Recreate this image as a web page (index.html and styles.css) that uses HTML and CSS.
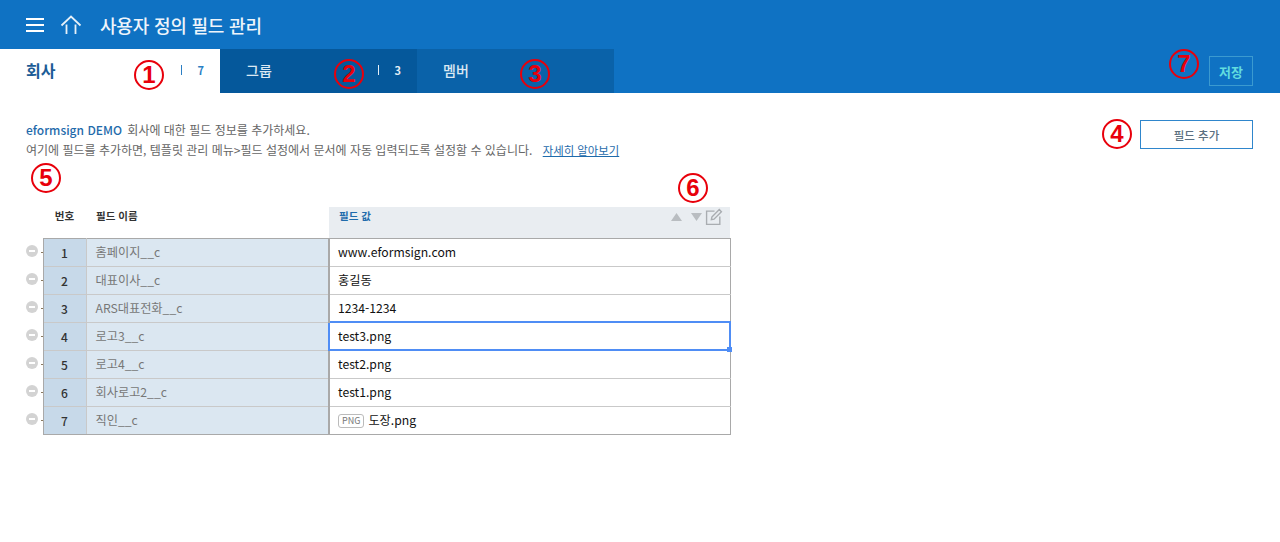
FILE: index.html
```html
<!DOCTYPE html>
<html lang="ko">
<head>
    <meta charset="UTF-8">
    <meta name="viewport" content="width=device-width, initial-scale=1.0">
    <title>사용자 정의 필드 관리</title>
    <link rel="stylesheet" href="styles.css">
</head>
<body>
    <header class="topbar">
        <svg class="menu-icon" width="18" height="14" viewBox="0 0 18 14"><path d="M0 1h18M0 7h18M0 13h18" stroke="#fff" stroke-width="2" fill="none"/></svg>
        <svg class="home-icon" width="22" height="20" viewBox="0 0 22 20"><path d="M1.500 10.500 11 1.500l9.500 9M6.500 9.500V19M15.500 9.500V19" stroke="#e6f0f8" stroke-width="1.800" fill="none"/></svg>
        <h1>사용자 정의 필드 관리</h1>
    </header>

    <nav class="tabs">
        <div class="tab tab-active">
            <span class="tab-name">회사</span>
            <span class="tab-count">7</span>
        </div>
        <div class="tab tab-group">
            <span class="tab-name">그룹</span>
            <span class="tab-count">3</span>
        </div>
        <div class="tab tab-member">
            <span class="tab-name">멤버</span>
        </div>
        <button class="save-btn">저장</button>
    </nav>

    <main class="content">
        <div class="intro">
            <div>
                <p class="intro-line"><span class="company">eformsign DEMO</span> 회사에 대한 필드 정보를 추가하세요.</p>
                <p class="intro-line">여기에 필드를 추가하면, 템플릿 관리 메뉴&gt;필드 설정에서 문서에 자동 입력되도록 설정할 수 있습니다. <a class="more" href="#">자세히 알아보기</a></p>
            </div>
            <button class="add-btn">필드 추가</button>
        </div>

        <table class="fields">
            <thead>
                <tr>
                    <th class="col-gutter"></th>
                    <th class="col-num">번호</th>
                    <th class="col-name">필드 이름</th>
                    <th class="col-value">
                        <div class="value-head">
                            <span>필드 값</span>
                            <span class="value-tools">
                                <svg class="tool-up" width="11" height="8" viewBox="0 0 11 8"><path d="M5.500 0 11 8H0z" fill="#b9bdc1"/></svg>
                                <svg class="tool-down" width="11" height="8" viewBox="0 0 11 8"><path d="M0 0h11L5.500 8z" fill="#b9bdc1"/></svg>
                                <svg width="18" height="18" viewBox="0 0 17 17"><path d="M9 3H1.500v12.500H14V8M6.500 8.500 13.500 1.500l2 2-7 7-2.500.5z" stroke="#a9adb1" stroke-width="1.300" fill="none"/></svg>
                            </span>
                        </div>
                    </th>
                </tr>
            </thead>
            <tbody>
                <tr>
                    <td class="gutter"><span class="minus"></span></td>
                    <td class="num">1</td>
                    <td class="name">홈페이지__c</td>
                    <td class="value">www.eformsign.com</td>
                </tr>
                <tr>
                    <td class="gutter"><span class="minus"></span></td>
                    <td class="num">2</td>
                    <td class="name">대표이사__c</td>
                    <td class="value">홍길동</td>
                </tr>
                <tr>
                    <td class="gutter"><span class="minus"></span></td>
                    <td class="num">3</td>
                    <td class="name">ARS대표전화__c</td>
                    <td class="value">1234-1234</td>
                </tr>
                <tr>
                    <td class="gutter"><span class="minus"></span></td>
                    <td class="num">4</td>
                    <td class="name">로고3__c</td>
                    <td class="value selected">test3.png<span class="handle"></span></td>
                </tr>
                <tr>
                    <td class="gutter"><span class="minus"></span></td>
                    <td class="num">5</td>
                    <td class="name">로고4__c</td>
                    <td class="value">test2.png</td>
                </tr>
                <tr>
                    <td class="gutter"><span class="minus"></span></td>
                    <td class="num">6</td>
                    <td class="name">회사로고2__c</td>
                    <td class="value">test1.png</td>
                </tr>
                <tr>
                    <td class="gutter"><span class="minus"></span></td>
                    <td class="num">7</td>
                    <td class="name">직인__c</td>
                    <td class="value"><span class="file-tag">PNG</span>도장.png</td>
                </tr>
            </tbody>
        </table>
    </main>

    <!-- red callouts drawn over the screenshot -->
    <span class="mark mark-1">1</span>
    <span class="mark mark-2">2</span>
    <span class="mark mark-3">3</span>
    <span class="mark mark-4">4</span>
    <span class="mark mark-5">5</span>
    <span class="mark mark-6">6</span>
    <span class="mark mark-7">7</span>
</body>
</html>
```

FILE: styles.css
```css
* {
    box-sizing: border-box;
}
html, body {
    height: 100%;
}
body {
    margin: 0;
    background: #fff;
    color: #222;
    font-family: "Noto Sans CJK KR", "Noto Sans", sans-serif;
    overflow: hidden;
}

.topbar {
    display: flex;
    align-items: center;
    height: 49px;
    padding-left: 26px;
    background: #0f72c3;
    color: #fff;
}
.menu-icon {
    margin-right: 16px;
}
.home-icon {
    margin-right: 18px;
}
.topbar h1 {
    margin: 0;
    font-size: 18px;
    font-weight: 500;
    letter-spacing: -0.2px;
    color: #eef5fb;
}

.tabs {
    display: flex;
    align-items: stretch;
    height: 44px;
    background: #0f72c3;
}
.tab {
    display: flex;
    align-items: center;
    justify-content: space-between;
    width: 197px;
    padding: 0 16px 2px 26px;
    font-size: 14px;
    font-weight: 500;
    color: #dbe8f3;
}
.tab-active {
    width: 220px;
    background: #fff;
    color: #1c5c96;
    font-size: 16px;
    font-weight: 700;
}
.tab-group {
    background: #05589b;
}
.tab-member {
    background: #0a62a9;
}
.tab-count {
    padding-left: 16px;
    border-left: 1px solid currentColor;
    font-size: 11px;
    font-weight: 700;
    line-height: 10px;
    color: #e4eef6;
}
.tab-active .tab-count {
    color: #2b7fc4;
    border-color: #2b7fc4;
}
.save-btn {
    align-self: center;
    width: 44px;
    height: 30px;
    margin: 0 27px 0 auto;
    padding: 0;
    background: transparent;
    border: 1px solid #3b9ad0;
    color: #62dcdf;
    font: 700 13px "Noto Sans CJK KR", sans-serif;
}

.content {
    padding: 27px 27px 0 26px;
}
.intro {
    display: flex;
    justify-content: space-between;
    align-items: flex-start;
    height: 87px;
}
.intro-line {
    margin: 0;
    font-size: 12px;
    line-height: 20px;
    color: #666;
}
.company {
    margin-right: 2px;
    color: #1f6bab;
    font-weight: 500;
}
.more {
    margin-left: 7px;
    color: #1f6bab;
    font-size: 11.400px;
    text-decoration: underline;
}
.add-btn {
    width: 113px;
    height: 29px;
    padding: 0;
    background: #fff;
    border: 1px solid #2f86cc;
    color: #5a6f80;
    font: 500 11.500px "Noto Sans CJK KR", sans-serif;
}

.fields {
    border-collapse: collapse;
    table-layout: fixed;
    width: 705px;
    font-size: 12.200px;
}
.fields th {
    height: 31px;
    padding: 0 0 14px;
    font-size: 10.500px;
    font-weight: 700;
    text-align: left;
    color: #333;
}
.col-gutter {
    width: 17px;
}
.col-num {
    width: 43px;
    text-align: center !important;
}
.col-name {
    width: 243px;
    padding-left: 10px !important;
}
.fields th.col-value {
    padding: 0 7px 0 10px;
    background: #e9edf1;
    color: #1f6bab;
    vertical-align: top;
}
.value-head {
    display: flex;
    justify-content: space-between;
    padding-top: 1px;
}
.value-tools {
    display: flex;
    align-items: center;
}
.tool-down {
    margin: 0 3px 0 9px;
}
.fields td {
    height: 28px;
    padding: 0;
    border: 1px solid #c9c9c9;
}
.fields td.gutter {
    border: 0;
    border-right: 1px solid #a9a9a9;
}
.minus {
    display: block;
    position: relative;
    width: 12px;
    height: 12px;
    margin-top: -2px;
    border-radius: 50%;
    background: #d3d3d3;
}
.minus::after {
    content: "";
    position: absolute;
    left: 3px;
    top: 5px;
    width: 6px;
    height: 2px;
    background: #fff;
}
.minus::before {
    content: "";
    position: absolute;
    left: 15px;
    top: 7px;
    width: 2px;
    height: 1px;
    background: #8a7a60;
}
.num {
    background: #c7d9e9;
    color: #333;
    font-size: 12px;
    font-weight: 500;
    text-align: center;
}
.name {
    padding-left: 9px !important;
    background: #dbe7f1;
    color: #777;
}
.value {
    padding-left: 8px !important;
    color: #111;
}
.fields td.value {
    border-left: 2px solid #a9a9a9;
    border-right: 1px solid #a9a9a9;
}
.fields tbody tr:first-child td.num,
.fields tbody tr:first-child td.name,
.fields tbody tr:first-child td.value {
    border-top: 1px solid #a9a9a9;
}
.fields tbody tr:last-child td.num,
.fields tbody tr:last-child td.name,
.fields tbody tr:last-child td.value {
    border-bottom: 1px solid #a9a9a9;
}
.fields td.selected {
    position: relative;
    border: 2px solid #4f8df5;
}
.handle {
    position: absolute;
    right: -3px;
    bottom: -3px;
    width: 5px;
    height: 5px;
    background: #4f8df5;
}
.file-tag {
    display: inline-block;
    margin-right: 4px;
    padding: 0 3px;
    border: 1px solid #bbb;
    border-radius: 3px;
    color: #777;
    font-size: 9px;
    line-height: 12px;
    vertical-align: 1px;
}

.mark {
    position: absolute;
    width: 30px;
    height: 30px;
    border: 2px solid #e8000b;
    border-radius: 50%;
    background: transparent;
    color: #e8000b;
    font-family: "Liberation Sans", sans-serif;
    font-size: 24px;
    font-weight: 700;
    line-height: 26px;
    text-align: center;
}
.mark-1 { left: 134px; top: 60px; }
.mark-2 { left: 334px; top: 59px; }
.mark-3 { left: 520px; top: 59px; }
.mark-4 { left: 1102px; top: 119px; }
.mark-5 { left: 31px; top: 163px; }
.mark-6 { left: 678px; top: 173px; }
.mark-7 { left: 1169px; top: 49px; }
```
